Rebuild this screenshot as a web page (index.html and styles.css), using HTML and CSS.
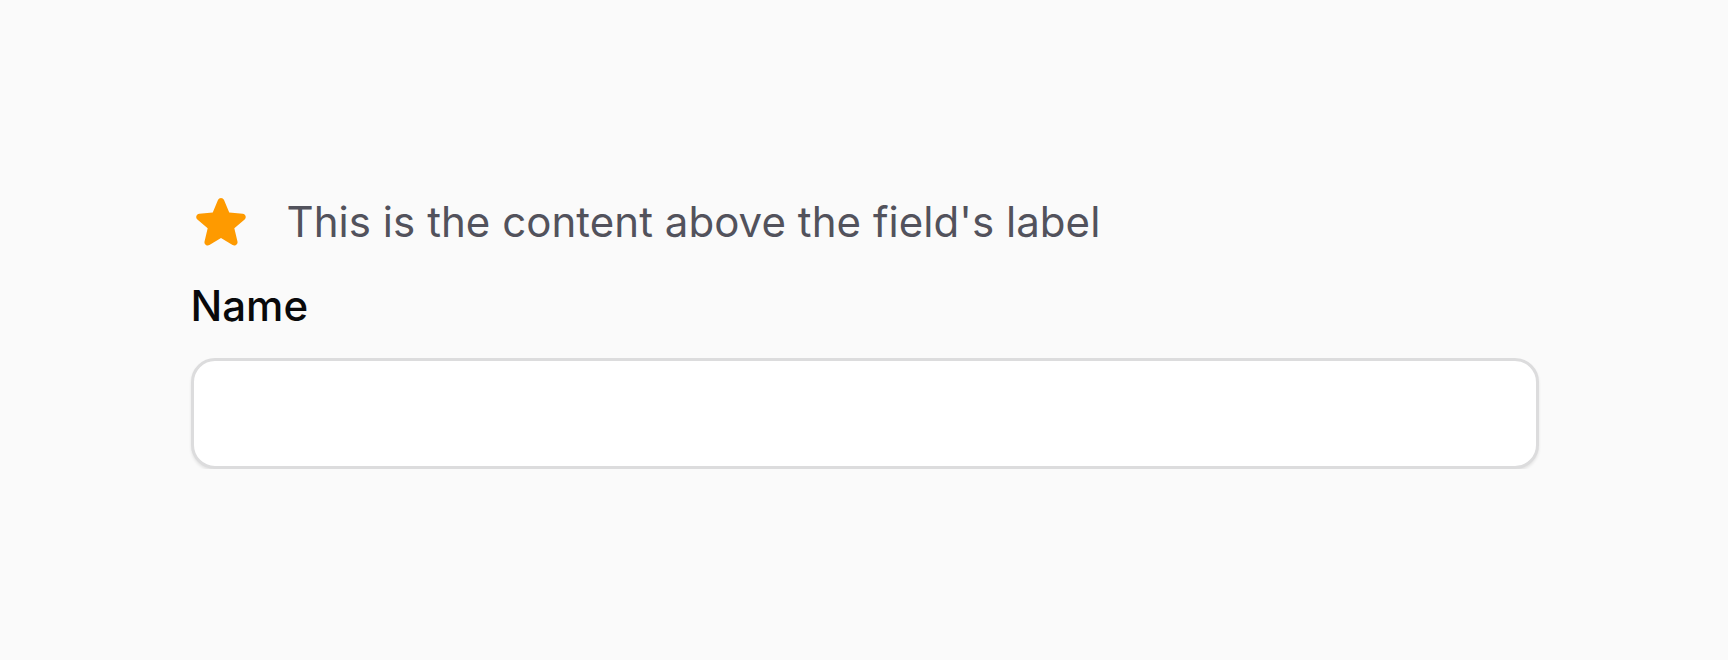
FILE: index.html
```html
<!DOCTYPE html>
<html lang="en">
<head>
<meta charset="utf-8">
<title>Field</title>
<link rel="stylesheet" href="styles.css">
</head>
<body>
<main class="page">
  <div class="field">
    <div class="above">
      <svg class="star" viewBox="0 0 24 24" aria-hidden="true"><path fill="currentColor" fill-rule="evenodd" d="M10.788 3.21c.448-1.077 1.976-1.077 2.424 0l2.082 5.006 5.404.434c1.164.093 1.636 1.545.749 2.305l-4.117 3.527 1.257 5.273c.271 1.136-.964 2.033-1.96 1.425L12 18.354 7.373 21.18c-.996.608-2.231-.29-1.96-1.425l1.257-5.273-4.117-3.527c-.887-.76-.415-2.212.749-2.305l5.404-.434 2.082-5.005Z" clip-rule="evenodd"/></svg>
      <span class="above-text">This is the content above the field's label</span>
    </div>
    <label class="label" for="name">Name</label>
    <div class="input-wrap">
      <input class="input" id="name" type="text">
    </div>
  </div>
</main>
</body>
</html>
```
FILE: styles.css
```css
html, body {
  margin: 0;
  padding: 0;
  background: #fafafa;
}
body {
  font-family: Inter, "Noto Sans", sans-serif;
}
.page {
  width: 1348px;
  margin: 0 auto;
  padding-top: 192px;
  padding-left: 1px;
  box-sizing: content-box;
}
.field {
  display: flex;
  flex-direction: column;
  gap: 24px;
}
.above {
  display: flex;
  align-items: center;
  gap: 36px;
  height: 60px;
}
.star {
  width: 60px;
  height: 60px;
  color: #fe9a00;
  flex: none;
}
.above-text {
  font-size: 42px;
  line-height: 60px;
  color: #52525c;
  letter-spacing: 0.05px;
}
.label {
  font-size: 42px;
  line-height: 60px;
  font-weight: 500;
  color: #09090b;
}
.input-wrap {
  margin-top: -2px;
  height: 111px;
  box-sizing: border-box;
  border: 3px solid #dcdcdd;
  border-radius: 24px;
  background: #fff;
  box-shadow: 0 2px 3px rgba(0, 0, 0, 0.09);
}
.input {
  display: block;
  width: 100%;
  height: 100%;
  box-sizing: border-box;
  border: 0;
  outline: none;
  background: transparent;
  font: inherit;
  font-size: 42px;
  padding: 0 36px;
  border-radius: 24px;
}
```
